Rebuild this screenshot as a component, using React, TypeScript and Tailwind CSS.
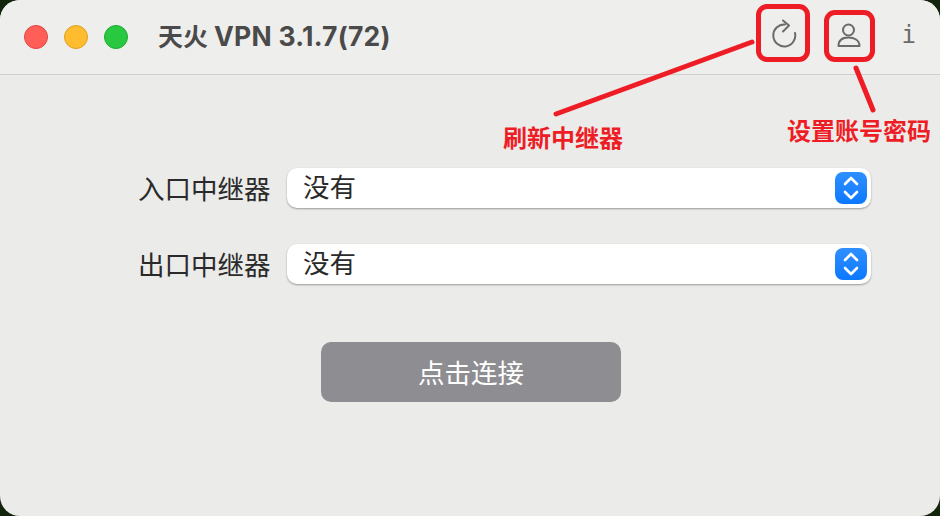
const cjk = { fontFamily: '"Inter", "Noto Sans CJK SC", sans-serif' }

function TrafficLights() {
  return (
    <div className="flex items-center gap-4">
      <div className="w-6 h-6 rounded-full bg-[#ff5f57] border border-[#e0443e]" />
      <div className="w-6 h-6 rounded-full bg-[#febc2e] border border-[#dea123]" />
      <div className="w-6 h-6 rounded-full bg-[#28c840] border border-[#1fa92f]" />
    </div>
  )
}

function RefreshIcon() {
  return (
    <svg width="26" height="36" viewBox="0 0 26 36" fill="none" stroke="#6b6b6b" strokeWidth="2" strokeLinecap="round" strokeLinejoin="round">
      <path d="M14 5.5 A11 11 0 1 0 24 14" />
      <path d="M12 1.5 L18 6.5 L12 12.5" />
    </svg>
  )
}

function UserIcon() {
  return (
    <svg width="24" height="30" viewBox="0 0 24 30" fill="none" stroke="#6b6b6b" strokeWidth="2" strokeLinejoin="round">
      <circle cx="11.5" cy="8" r="5.5" />
      <path d="M1.5 24 C1.5 18 6 15.5 11.5 15.5 C17 15.5 22.5 18 22.5 24 Z" />
    </svg>
  )
}

function Stepper() {
  return (
    <div className="w-8 h-8 rounded-lg bg-gradient-to-b from-[#2d8fff] to-[#0a78ff] flex items-center justify-center">
      <svg width="16" height="26" viewBox="0 0 16 26" fill="none" stroke="#fff" strokeWidth="2.6" strokeLinecap="round" strokeLinejoin="round">
        <path d="M2 9 L8 3 L14 9" />
        <path d="M2 17 L8 23 L14 17" />
      </svg>
    </div>
  )
}

function RelayRow({ label }: { label: string }) {
  return (
    <div className="flex items-center gap-[17px]">
      <span className="w-[132px] h-10 pt-[1px] text-[26.5px] leading-10 text-[#2a2a2a] whitespace-nowrap">{label}</span>
      <div className="w-[584px] h-10 rounded-[10px] bg-white shadow-[0_1px_2px_rgba(0,0,0,0.35)] flex items-center justify-between pl-4 pr-1">
        <span className="text-[26.5px] leading-10 text-[#2a2a2a] -mt-0.5">没有</span>
        <Stepper />
      </div>
    </div>
  )
}

export default function App() {
  return (
    <div className="w-[940px] h-[516px] bg-[#12240c] overflow-hidden" style={cjk}>
      <div className="relative w-full h-full rounded-[20px] bg-[#ebebe9] overflow-hidden flex flex-col">
        {/* Title bar */}
        <div className="h-[75px] shrink-0 bg-[#eeeeed] border-b border-[#cfcfcd] flex items-center pl-6 pr-6">
          <TrafficLights />
          <span className="ml-[30px] text-[25px] font-semibold text-[#4a4a4a] whitespace-nowrap">
            天火<span className="ml-[6px] text-[26.5px] font-bold tracking-[0.25px]">VPN 3.1.7(72)</span>
          </span>
          <div className="ml-auto flex items-center">
            <RefreshIcon />
            <div className="ml-10"><UserIcon /></div>
            <span className="ml-[41px] text-[24px] text-[#6b6b6b] -mt-1" style={{ fontFamily: '"DejaVu Sans Mono", monospace' }}>i</span>
          </div>
        </div>

        {/* Form */}
        <div className="flex-1 flex flex-col items-start pt-[93px] pl-[138px]">
          <div className="flex flex-col gap-9">
            <RelayRow label="入口中继器" />
            <RelayRow label="出口中继器" />
          </div>
          <button className="mt-[58px] ml-[183px] w-[300px] h-[60px] rounded-[10px] bg-[#8e8d91] text-white text-[26.5px] leading-none pt-0.5">点击连接</button>
        </div>

        {/* Red annotations */}
        <div className="absolute left-[756px] top-[4px] w-[54px] h-[58px] rounded-[11px] border-[5px] border-[#ee1c25]" />
        <div className="absolute left-[824px] top-[10px] w-[51px] h-[52px] rounded-[11px] border-[5px] border-[#ee1c25]" />
        <svg className="absolute left-0 top-0" width="940" height="516" fill="none" stroke="#ee1c25" strokeWidth="5" strokeLinecap="round">
          <line x1="556" y1="114" x2="752" y2="42" />
          <line x1="856" y1="68" x2="873" y2="110" />
        </svg>
        <span className="absolute left-[503px] top-[121px] text-2xl leading-9 font-bold text-[#ee1c25] whitespace-nowrap">刷新中继器</span>
        <span className="absolute left-[787px] top-[114px] text-2xl leading-9 font-bold text-[#ee1c25] whitespace-nowrap">设置账号密码</span>
      </div>
    </div>
  )
}
